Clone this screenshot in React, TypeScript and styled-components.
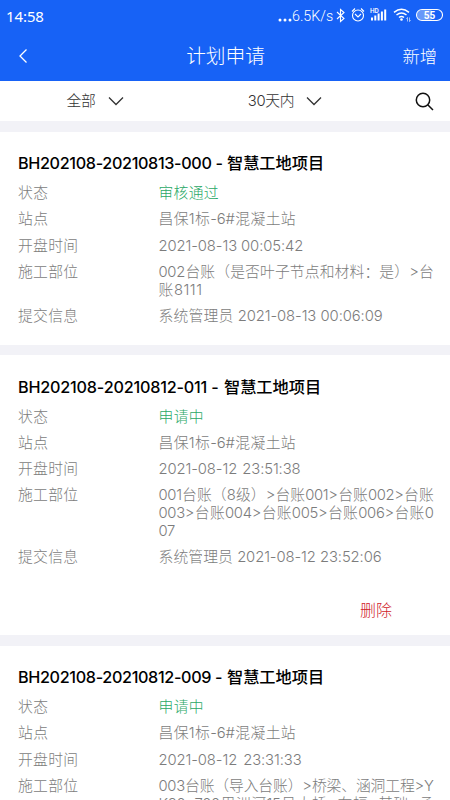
import styled, { createGlobalStyle } from "styled-components";

const GlobalStyle = createGlobalStyle`
  * {
    box-sizing: border-box;
  }
  body {
    margin: 0;
    height: 800px;
    overflow: hidden;
    background-color: #f2f2f7;
    font-family: Inter, "Noto Sans CJK SC", sans-serif;
    font-weight: 300;
  }
`;

const Screen = styled.div`
  width: 450px;
  height: 800px;
  overflow: hidden;
`;

const Top = styled.header`
  height: 81px;
  color: white;
  background-color: #1762f6;
`;

const StatusBar = styled.div`
  height: 31px;
  padding: 0 7px 0 6px;
  display: flex;
  justify-content: space-between;
  align-items: center;
`;

const Line = styled.span<{ $width: number; $spacing?: number }>`
  display: block;
  width: ${(p) => p.$width}px;
  letter-spacing: ${(p) => (p.$spacing ? `${p.$spacing}px` : "inherit")};
  white-space: nowrap;
  text-align-last: justify;
`;

const Clock = styled.div`
  font-family: "Noto Sans", sans-serif;
  font-size: 15px;
  font-weight: 400;
  letter-spacing: -0.1px;
  line-height: 20px;
`;

const StatusIcons = styled.div`
  display: flex;
  align-items: center;
`;

const Dots = styled.svg`
  margin-top: 8px;
`;

const Speed = styled.div`
  width: 43px;
  font-family: Roboto, sans-serif;
  font-size: 14.3px;
  font-weight: 300;
  white-space: nowrap;
`;

const NavBar = styled.nav`
  height: 50px;
  padding: 0 13px 0 18px;
  display: grid;
  grid-template-columns: 58px 1fr 62px;
  align-items: center;
`;

const Title = styled.h1`
  margin: 0;
  font-size: 19.7px;
  line-height: 28px;
  font-weight: 300;
  text-align: center;
`;

const AddButton = styled.button`
  padding: 0 0 2px;
  border: none;
  background: none;
  color: white;
  font-family: inherit;
  font-size: 17.3px;
  font-weight: 300;
  text-align: right;
`;

const FilterBar = styled.div`
  height: 40px;
  padding: 0 16px 0 0;
  display: grid;
  grid-template-columns: 190px 190px 1fr;
  align-items: center;
  background-color: white;
  color: #333;
`;

const Filter = styled.div`
  display: flex;
  align-items: center;
  justify-content: center;
  gap: 12px;
  font-size: 14.8px;
  letter-spacing: -0.3px;
`;

const FilterText = styled.span`
  padding-bottom: 3px;
`;

const SearchIcon = styled.svg`
  justify-self: end;
`;

const Card = styled.section<{ $height: number }>`
  height: ${(p) => p.$height}px;
  margin-top: 10.5px;
  padding: 18.5px 15px 0 18px;
  background-color: white;
`;

const CardTitle = styled.h2`
  display: flex;
  gap: 5px;
  margin: 0 0 9px;
  color: black;
  font-size: 16.2px;
  font-weight: 500;
  line-height: 26px;
  white-space: nowrap;
`;

const Code = styled.span<{ $width: number; $spacing: number }>`
  width: ${(p) => p.$width}px;
  letter-spacing: ${(p) => p.$spacing}px;
`;

const Row = styled.div`
  display: flex;
  margin-bottom: 8.6px;
  color: #7c7c7c;
  font-size: 14.8px;
  line-height: 17.7px;
`;

const Label = styled.div`
  width: 140.5px;
  flex-shrink: 0;
`;

const Value = styled.div<{ $green?: boolean; $tight?: boolean }>`
  color: ${(p) => (p.$green ? "#2aa866" : "inherit")};
  letter-spacing: ${(p) => (p.$tight ? "-0.3px" : "-0.1px")};
`;

const DeleteButton = styled.button`
  display: block;
  margin: 31px 43px 0 auto;
  padding: 0;
  border: none;
  background: none;
  color: #d0222a;
  font-family: inherit;
  font-size: 16px;
  font-weight: 300;
  line-height: 24px;
`;

// [text, rendered width, letter spacing]
type TextLine = [string, number, number?];

interface Plan {
  code: string;
  codeWidth: number;
  codeSpacing: number;
  height: number;
  status: TextLine;
  opened: TextLine;
  parts: TextLine[];
  submitted: TextLine;
  removable?: boolean;
}

const plans: Plan[] = [
  {
    code: "BH202108-20210813-000 -",
    codeWidth: 204,
    codeSpacing: -0.35,
    height: 213,
    status: ["审核通过", 60],
    opened: ["2021-08-13 00:05:42", 144],
    parts: [
      ["002台账（是否叶子节点和材料：是）>台", 275],
      ["账8111", 44, 0.5],
    ],
    submitted: ["系统管理员 2021-08-13 00:06:09", 224],
  },
  {
    code: "BH202108-20210812-011 -",
    codeWidth: 201,
    codeSpacing: -0.2,
    height: 280,
    status: ["申请中", 45],
    opened: ["2021-08-12 23:51:38", 142],
    parts: [
      ["001台账（8级）>台账001>台账002>台账", 275],
      ["003>台账004>台账005>台账006>台账0", 275],
      ["07", 17],
    ],
    submitted: ["系统管理员 2021-08-12 23:52:06", 223],
    removable: true,
  },
  {
    code: "BH202108-20210812-009 -",
    codeWidth: 204,
    codeSpacing: -0.35,
    height: 280,
    status: ["申请中", 45],
    opened: ["2021-08-12 23:31:33", 143],
    parts: [
      ["003台账（导入台账）>桥梁、涵洞工程>Y", 275],
      ["K80+700里洲河15号大桥>右幅>基础>承", 275],
    ],
    submitted: ["系统管理员 2021-08-12 23:32:06", 223],
  },
];

const Arrow = () => (
  <svg width="16" height="9" viewBox="0 0 16 9" fill="none" stroke="#333" strokeWidth="1.3">
    <path d="M1 .5l7 7 7-7" />
  </svg>
);

function StatusGlyphs() {
  return (
    <svg width="108" height="22" viewBox="335 5.5 108 22" fill="none" stroke="white" strokeWidth="1.1">
      <path d="M337 12.5l7 6.5-3.5 3v-12l3.5 3-7 6.5" />
      <circle cx="358" cy="16" r="5.5" />
      <path d="M355 14.5l3 3 3-3M352 12l3-3M364 12l-3-3" />
      <g fill="white" stroke="none">
        <path d="M371 18h2v3h-2zM374.3 16h2v5h-2zM377.6 14h2v7h-2zM380.9 12h2v9h-2zM384.2 10h2v11h-2z" />
        <circle cx="401.5" cy="20" r="1.3" />
        <text x="370" y="13" fontFamily="Roboto" fontSize="6.5" fontWeight="500">HD</text>
      </g>
      <path d="M394 12.8q7.5-6 15 0M396.5 15.5q5-4 10 0M399 18q2.5-2 5 0" strokeWidth="1.5" />
      <path d="M407.5 22v-4l-1.2 1.2M409.5 18v4l1.2-1.2" strokeWidth=".6" />
      <rect x="416.5" y="10" width="26" height="11" rx="5.5" />
      <path d="M422 10.5h9.5v10H422a5 5 0 0 1 0-10z" fill="white" fillOpacity=".35" stroke="none" />
      <text x="429.5" y="19.3" fill="white" stroke="none" fontFamily="Roboto" fontSize="10" fontWeight="700" textAnchor="middle">55</text>
    </svg>
  );
}

interface FieldProps {
  label: string;
  labelWidth: number;
  lines: TextLine[];
  green?: boolean;
  tight?: boolean;
}

function Field({ label, labelWidth, lines, green, tight }: FieldProps) {
  return (
    <Row>
      <Label>
        <Line $width={labelWidth}>{label}</Line>
      </Label>
      <Value $green={green} $tight={tight}>
        {lines.map(([text, width, spacing]) => (
          <Line key={text} $width={width} $spacing={spacing}>{text}</Line>
        ))}
      </Value>
    </Row>
  );
}

function PlanCard({ plan }: { plan: Plan }) {
  return (
    <Card $height={plan.height}>
      <CardTitle>
        <Code $width={plan.codeWidth} $spacing={plan.codeSpacing}>{plan.code}</Code>
        <span>智慧工地项目</span>
      </CardTitle>
      <Field label="状态" labelWidth={30} lines={[plan.status]} green />
      <Field label="站点" labelWidth={30} lines={[["昌保1标-6#混凝土站", 137]]} />
      <Field label="开盘时间" labelWidth={60} lines={[plan.opened]} />
      <Field label="施工部位" labelWidth={60} lines={plan.parts} tight />
      <Field label="提交信息" labelWidth={60} lines={[plan.submitted]} />
      {plan.removable && <DeleteButton>删除</DeleteButton>}
    </Card>
  );
}

function App() {
  return (
    <>
      <GlobalStyle />
      <Screen>
        <Top>
          <StatusBar>
            <Clock>14:58</Clock>
            <StatusIcons>
              <Dots width="14" height="4" viewBox="0 0 14 4" fill="white">
                <circle cx="2" cy="2" r="1.5" />
                <circle cx="7" cy="2" r="1.5" />
                <circle cx="12" cy="2" r="1.5" />
              </Dots>
              <Speed>6.5K/s</Speed>
              <StatusGlyphs />
            </StatusIcons>
          </StatusBar>
          <NavBar>
            <svg width="10" height="16" viewBox="0 0 10 16" fill="none" stroke="white" strokeWidth="1.3">
              <path d="M8.5 1.5L2 8l6.5 6.5" />
            </svg>
            <Title>计划申请</Title>
            <AddButton>新增</AddButton>
          </NavBar>
        </Top>
        <FilterBar>
          <Filter>
            <FilterText>全部</FilterText> <Arrow />
          </Filter>
          <Filter>
            <FilterText>30天内</FilterText> <Arrow />
          </Filter>
          <SearchIcon width="19" height="19" viewBox="0 0 19 19" fill="none" stroke="#111" strokeWidth="1.5">
            <circle cx="8" cy="8" r="6.7" />
            <path d="M12.7 12.7L18 18" />
          </SearchIcon>
        </FilterBar>
        {plans.map((plan) => (
          <PlanCard key={plan.code} plan={plan} />
        ))}
      </Screen>
    </>
  );
}

export default App;
